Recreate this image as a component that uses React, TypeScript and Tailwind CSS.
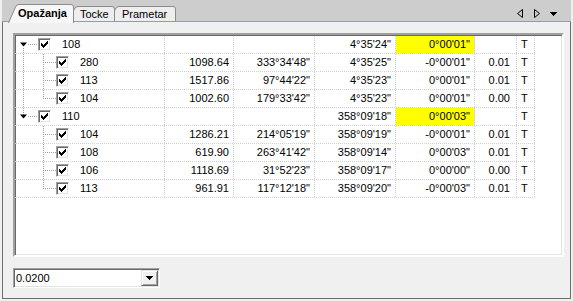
import React from "react";

type R = {
  kind: "p" | "c";
  name: string;
  d?: string;
  a?: string;
  b: string;
  e: string;
  f?: string;
  yellow?: boolean;
  parentNext?: boolean;
  last?: boolean;
  hasNext?: boolean;
  hasPrev?: boolean;
};

const rows: R[] = [
  { kind: "p", name: "108", b: "4°35'24\"", e: "0°00'01\"", yellow: true, hasNext: true },
  { kind: "c", name: "280", d: "1098.64", a: "333°34'48\"", b: "4°35'25\"", e: "-0°00'01\"", f: "0.01", parentNext: true },
  { kind: "c", name: "113", d: "1517.86", a: "97°44'22\"", b: "4°35'23\"", e: "0°00'01\"", f: "0.01", parentNext: true },
  { kind: "c", name: "104", d: "1002.60", a: "179°33'42\"", b: "4°35'23\"", e: "0°00'01\"", f: "0.00", parentNext: true, last: true },
  { kind: "p", name: "110", b: "358°09'18\"", e: "0°00'03\"", yellow: true, hasPrev: true },
  { kind: "c", name: "104", d: "1286.21", a: "214°05'19\"", b: "358°09'19\"", e: "-0°00'01\"", f: "0.01" },
  { kind: "c", name: "108", d: "619.90", a: "263°41'42\"", b: "358°09'14\"", e: "0°00'03\"", f: "0.01" },
  { kind: "c", name: "106", d: "1118.69", a: "31°52'23\"", b: "358°09'17\"", e: "0°00'00\"", f: "0.00" },
  { kind: "c", name: "113", d: "961.91", a: "117°12'18\"", b: "358°09'20\"", e: "-0°00'03\"", f: "0.01", last: true },
];

const LINE = "#a0a0a0";

function Check() {
  return (
    <div className="w-[13px] h-[13px] shrink-0 bg-white border border-t-[#a0a0a0] border-l-[#a0a0a0] border-b-white border-r-white shadow-[inset_1px_1px_0_#696969,inset_-1px_-1px_0_#e3e3e3] flex items-center justify-center">
      <svg width="7" height="7" viewBox="0 0 7 7" shapeRendering="crispEdges">
        <path
          d="M6 0h1v1h-1zM5 1h2v1h-2zM0 2h1v1h-1zM4 2h3v1h-3zM0 3h2v1h-2zM3 3h3v1h-3zM0 4h5v1h-5zM1 5h3v1h-3zM2 6h1v1h-1z"
          fill="#000"
        />
      </svg>
    </div>
  );
}

function TreeGlyph({ r }: { r: R }) {
  if (r.kind === "p") {
    return (
      <svg width="23" height="17" className="shrink-0" shapeRendering="crispEdges">
        {r.hasPrev && <line x1="8.5" y1="0" x2="8.5" y2="7" stroke={LINE} strokeDasharray="1 1" />}
        {r.hasNext && <line x1="8.5" y1="12" x2="8.5" y2="17" stroke={LINE} strokeDasharray="1 1" />}
        <path d="M5 6.5h7l-3.5 4z" fill="#000" shapeRendering="auto" />
        <line x1="13" y1="8.5" x2="23" y2="8.5" stroke={LINE} strokeDasharray="1 1" />
      </svg>
    );
  }
  return (
    <svg width="41" height="17" className="shrink-0" shapeRendering="crispEdges">
      {r.parentNext && <line x1="8.5" y1="0" x2="8.5" y2="17" stroke={LINE} strokeDasharray="1 1" />}
      <line x1="28.5" y1="0" x2="28.5" y2={r.last ? 9 : 17} stroke={LINE} strokeDasharray="1 1" />
      <line x1="30" y1="8.5" x2="41" y2="8.5" stroke={LINE} strokeDasharray="1 1" />
    </svg>
  );
}

const cell = "h-full border-r border-dotted border-[#d0d0d0] flex items-center shrink-0";

function Row({ r }: { r: R }) {
  return (
    <div className="flex h-[18px] border-b border-dotted border-[#d0d0d0] w-[520px]">
      <div className={`${cell} w-[150px]`}>
        <TreeGlyph r={r} />
        <Check />
        <span className="ml-[11px]">{r.name}</span>
      </div>
      <div className={`${cell} w-[69px] justify-end pr-[4px]`}>{r.d}</div>
      <div className={`${cell} w-[81px] justify-end pr-[4px]`}>{r.a}</div>
      <div className={`${cell} w-[81px] justify-end pr-[4px]`}>{r.b}</div>
      <div className={`${cell} w-[79px] justify-end pr-[4px] ${r.yellow ? "bg-[#ffff00]" : ""}`}>{r.e}</div>
      <div className={`${cell} w-[42px] justify-end pr-[6px]`}>{r.f}</div>
      <div className={`${cell} w-[18px] pl-[4px]`}>T</div>
    </div>
  );
}

function TabShape({ w, h, top, active }: { w: number; h: number; top: number; active?: boolean }) {
  const bottom = active ? h + 1 : h;
  const d = `M0.5 ${bottom} L7.5 ${top + 2.5} Q8.5 ${top} 11 ${top} L${w - 3} ${top} Q${w - 0.5} ${top} ${w - 0.5} ${top + 2.5} L${w - 0.5} ${bottom}`;
  return (
    <svg className="absolute left-0 top-0 overflow-visible" width={w} height={h}>
      <path d={`${d} Z`} fill={active ? "#f7f7f7" : "#eeeeee"} stroke="none" />
      <path d={d} fill="none" stroke="#8b8b8b" strokeWidth="1" />
    </svg>
  );
}

export default function App() {
  return (
    <div className="w-[573px] h-[301px] bg-[#f0f0f0] font-['Liberation_Sans',Arial,sans-serif] text-[11px] text-black leading-none select-none">
      <div className="flex flex-col h-full px-[2px] pb-[2px]">
        {/* tab strip */}
        <div className="relative h-[22px] bg-[#cdcdcd] border-b border-[#8e9db0] flex items-start shrink-0 pl-[6px]">
          <div className="relative z-30 w-[66px] h-[19px] mt-[3px] flex items-center">
            <TabShape w={66} h={19} top={1.5} active />
            <span className="relative pl-[10px] font-bold text-[11px] pt-[1px]">Opažanja</span>
          </div>
          <div className="relative z-20 w-[48px] h-[18px] mt-[3px] ml-[-7px] flex items-center">
            <TabShape w={48} h={18} top={3.5} />
            <span className="relative pl-[13px] pt-[4px]">Tocke</span>
          </div>
          <div className="relative z-10 w-[68px] h-[18px] mt-[3px] ml-[-7px] flex items-center">
            <TabShape w={68} h={18} top={3.5} />
            <span className="relative pl-[14px] pt-[4px]">Prametar</span>
          </div>
          <div className="ml-auto mr-[8px] mt-[9px] flex items-center">
            <svg width="48" height="10" shapeRendering="crispEdges">
              <path d="M7.5 0.5 L2.5 4.5 L7.5 8.5 Z" fill="none" stroke="#000" shapeRendering="auto" />
              <path d="M19.5 0.5 L24.5 4.5 L19.5 8.5 Z" fill="none" stroke="#000" shapeRendering="auto" />
              <path d="M35 3h7v1h-7zM36 4h5v1h-5zM37 5h3v1h-3zM38 6h1v1h-1z" fill="#000" />
            </svg>
          </div>
        </div>

        {/* panel */}
        <div className="flex-1 border-l border-r border-b border-[#6d6d6d] pl-[10px] pr-[6px] pt-[11px] flex flex-col">
          <div className="h-[224px] bg-white border-2 border-t-[#a0a0a0] border-l-[#a0a0a0] border-b-white border-r-white shadow-[inset_1px_1px_0_#696969,inset_-1px_-1px_0_#e3e3e3] pt-[1px]">
            {rows.map((r, i) => (
              <Row key={i} r={r} />
            ))}
          </div>

          <div className="mt-[11px] w-[147px] h-[20px] bg-white border border-t-[#a0a0a0] border-l-[#a0a0a0] border-b-white border-r-white shadow-[inset_1px_1px_0_#696969,inset_-1px_-1px_0_#e3e3e3] flex p-[1px]">
            <div className="flex-1 flex items-center pl-[1px]">0.0200</div>
            <div className="w-[17px] h-full bg-[#f0f0f0] border border-t-[#e3e3e3] border-l-[#e3e3e3] border-b-[#696969] border-r-[#696969] shadow-[inset_1px_1px_0_#ffffff,inset_-1px_-1px_0_#a0a0a0] flex items-center justify-center">
              <svg width="7" height="4" shapeRendering="crispEdges">
                <path d="M0 0h7v1h-7zM1 1h5v1h-5zM2 2h3v1h-3zM3 3h1v1h-1z" fill="#000" />
              </svg>
            </div>
          </div>
        </div>
      </div>
    </div>
  );
}
